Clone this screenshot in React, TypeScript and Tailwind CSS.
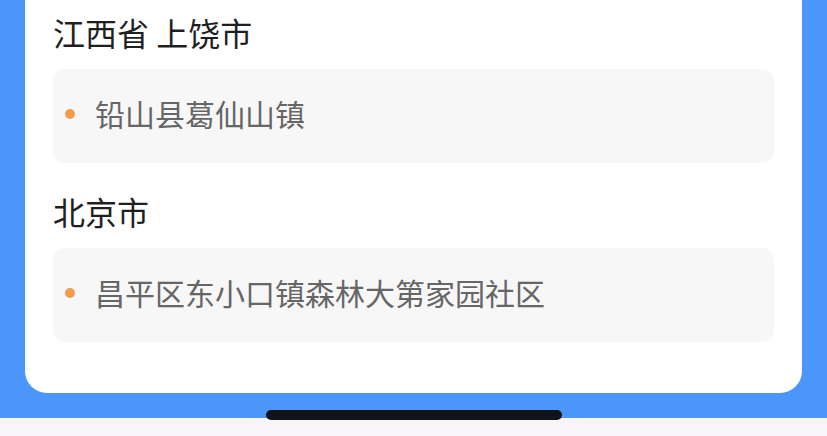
export default function App() {
  const groups = [
    { title: "江西省 上饶市", items: ["铅山县葛仙山镇"] },
    { title: "北京市", items: ["昌平区东小口镇森林大第家园社区"] },
  ];

  return (
    <div
      className="relative w-[827px] h-[436px] overflow-hidden bg-[#4a96fa] flex flex-col"
      style={{ fontFamily: '"Noto Sans CJK SC", "Noto Sans", sans-serif' }}
    >
      {/* Card */}
      <div className="mx-[25px] h-[393px] shrink-0 bg-white rounded-b-[22px] px-[28px] pt-[10px] flex flex-col gap-[26px]">
        {groups.map((g, i) => (
          <div key={i}>
            <div className="text-[32px] leading-[44px] text-[#1f1f1f]">{g.title}</div>
            <div className="mt-[15px] flex flex-col gap-2">
              {g.items.map((item, j) => (
                <div
                  key={j}
                  className="h-[94px] rounded-[12px] bg-[#f7f7f7] flex items-center pl-[12px] pb-[6px]"
                >
                  <span className="w-[10px] h-[10px] rounded-full bg-[#f29c4e] shrink-0 mt-[2px]" />
                  <span className="ml-[20px] text-[30px] leading-none text-[#666666]">{item}</span>
                </div>
              ))}
            </div>
          </div>
        ))}
      </div>

      <div className="h-[25px] shrink-0" />
      <div className="flex-1 bg-[#f8f4f7]" />

      {/* Home indicator */}
      <div className="absolute left-[266px] top-[410px] w-[296px] h-[10px] rounded-full bg-[#111318]" />
    </div>
  );
}
